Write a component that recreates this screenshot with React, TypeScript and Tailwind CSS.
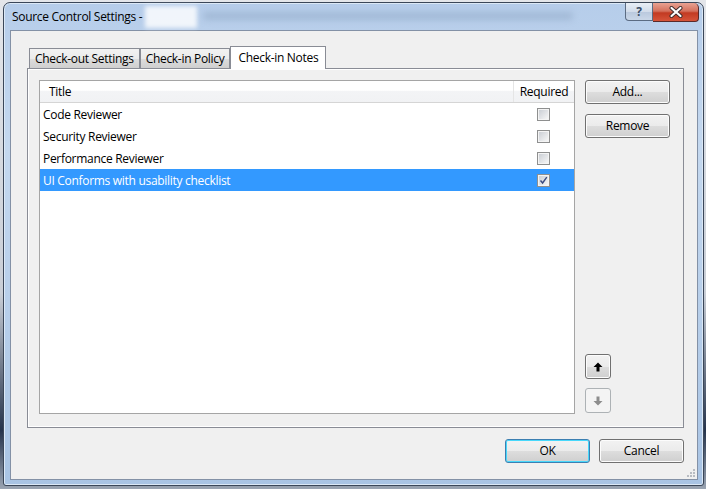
import { useState } from 'react';

type Note = {
  title: string;
  required: boolean;
};

const notes: Note[] = [
  { title: 'Code Reviewer', required: false },
  { title: 'Security Reviewer', required: false },
  { title: 'Performance Reviewer', required: false },
  { title: 'UI Conforms with usability checklist', required: true },
];

const font = "font-['Open_Sans',_'Noto_Sans',_sans-serif] tracking-[-0.3px]";

function Checkbox({ checked }: { checked: boolean }) {
  return (
    <span className="flex h-[13px] w-[13px] items-center justify-center border border-[#8e8f8f] bg-white">
      <span className="flex h-[11px] w-[11px] items-center justify-center border border-[#f4f4f4] bg-gradient-to-br from-[#cbcfd5] to-[#f6f6f6]">
        {checked && (
          <svg width="9" height="9" viewBox="0 0 9 9">
            <path d="M1.5 4.5 L3.6 7 L7.8 1.2" fill="none" stroke="#3a4a80" strokeWidth="1.4" />
          </svg>
        )}
      </span>
    </span>
  );
}

function Button({
  label,
  focused,
  className,
}: {
  label: string;
  focused?: boolean;
  className?: string;
}) {
  return (
    <button
      className={`flex h-[24px] w-[85px] items-center justify-center rounded-[3px] border text-[12px] text-black ${
        focused ? 'border-[#3c7fb1] shadow-[inset_0_0_0_1px_#48d8fb]' : 'border-[#707070] shadow-[inset_0_0_0_1px_#fcfcfc]'
      } bg-[linear-gradient(#f2f2f2_0%,#ebebeb_50%,#dddddd_51%,#cfcfcf_100%)] ${className ?? ''}`}
    >
      {label}
    </button>
  );
}

function ArrowButton({ up, disabled }: { up?: boolean; disabled?: boolean }) {
  const color = disabled ? '#8d8d8d' : '#000000';
  return (
    <button
      className={`flex h-[25px] w-[26px] items-center justify-center rounded-[3px] border ${
        disabled ? 'border-[#adb2b5] bg-[#f4f4f4]' : 'border-[#707070] bg-[linear-gradient(#f2f2f2_0%,#ebebeb_50%,#dddddd_51%,#cfcfcf_100%)] shadow-[inset_0_0_0_1px_#fcfcfc]'
      }`}
    >
      <svg width="10" height="10" viewBox="0 0 10 10">
        {up ? (
          <path d="M5 0.5 L9.5 5 L6.5 5 L6.5 9.5 L3.5 9.5 L3.5 5 L0.5 5 Z" fill={color} />
        ) : (
          <path d="M5 9.5 L9.5 5 L6.5 5 L6.5 0.5 L3.5 0.5 L3.5 5 L0.5 5 Z" fill={color} />
        )}
      </svg>
    </button>
  );
}

function Tab({ label, active }: { label: string; active?: boolean }) {
  if (active) {
    return (
      <div className="relative z-10 -mb-px flex h-[23px] items-start border border-b-0 border-[#898c95] bg-white px-[7px] pt-[2px] text-[12px] text-black">
        {label}
      </div>
    );
  }
  return (
    <div className="mt-[2px] flex h-[20px] items-center border border-b-0 border-[#898c95] bg-[linear-gradient(#f2f2f2_0%,#ebebeb_50%,#dddddd_51%,#cfcfcf_100%)] px-[5px] text-[12px] text-black">
      {label}
    </div>
  );
}

export default function App() {
  const [selected] = useState(3);

  return (
    <div className={`h-[489px] w-[706px] overflow-hidden bg-[linear-gradient(#e4e6ea_0%,#c9ced6_60%,#26344c_88%,#9aa4b2_100%)] pb-[3px] pl-[3px] pr-[2px] pt-[2px] ${font}`}>
      <div className="flex h-full flex-col rounded-t-[7px] rounded-b-[3px] border border-[#3b4759] bg-[linear-gradient(#b6cdea_0%,#c4d8ef_30%,#a9c4e4_100%)] shadow-[inset_0_0_0_1px_#dbe8f6]">
        <div className="relative flex h-[27px] shrink-0 items-start">
          <div className="ml-[8px] mt-[6px] text-[12px] leading-[16px] text-black">Source Control Settings -</div>
          <div className="ml-[3px] mt-[3px] h-[22px] w-[52px] bg-white/80 blur-[2px]" />
          <div className="ml-[6px] mt-[9px] h-[8px] w-[370px] rounded-full bg-[#8da6c4]/50 blur-[3px]" />
          <div className="ml-auto mr-[4px] flex">
            <div className="flex h-[18px] w-[28px] items-center justify-center rounded-bl-[4px] border border-t-0 border-[#5b6b82] bg-[linear-gradient(#e8eef6_0%,#d2dcea_50%,#b9c8dd_51%,#cad7e8_100%)] text-[12px] font-bold leading-none text-[#3b4d66]">
              ?
            </div>
            <div className="flex h-[19px] w-[46px] items-center justify-center rounded-br-[4px] rounded-tr-[5px] border border-l-0 border-t-0 border-[#5a2a2a] bg-[linear-gradient(#e8a292_0%,#d4715d_45%,#c23a22_55%,#d6543a_100%)]">
              <svg width="14" height="12" viewBox="0 0 14 12">
                <path d="M2.5 2 L11.5 10 M11.5 2 L2.5 10" stroke="#3a2a2a" strokeWidth="4" strokeLinecap="round" />
                <path d="M2.5 2 L11.5 10 M11.5 2 L2.5 10" stroke="#ffffff" strokeWidth="2.2" strokeLinecap="round" />
              </svg>
            </div>
          </div>
        </div>

        <div className="mb-[5px] ml-[6px] mr-[5px] flex flex-1 flex-col border border-[#8391a6] bg-[#f0f0f0]">
          <div className="relative flex flex-1 flex-col pl-[16px] pr-[13px] pt-[15px]">
            <div className="flex items-start pl-[2px]">
              <Tab label="Check-out Settings" />
              <Tab label="Check-in Policy" />
              <Tab label="Check-in Notes" active />
            </div>
            <div className="flex h-[360px] border border-[#898c95] bg-white p-px">
              <div className="flex flex-1 gap-[10px] bg-[#f0f0f0] pl-[10px] pr-[13px] pt-[10px]">
                <div className="flex h-[334px] w-[536px] flex-col border border-[#a5a5a5] bg-white">
                  <div className="flex h-[22px] shrink-0 border-b border-[#d5d5d5] bg-[linear-gradient(#ffffff_0%,#ffffff_45%,#f3f4f6_46%,#f1f2f4_100%)] text-[12px] text-black">
                    <div className="flex flex-1 items-center border-r border-[#e5e5e5] pl-[9px]">Title</div>
                    <div className="flex w-[60px] items-center justify-center">Required</div>
                  </div>
                  {notes.map((note, index) => (
                    <div
                      key={note.title}
                      className={`flex h-[22px] items-center text-[12px] ${
                        index === selected ? 'bg-[#3399ff] text-white' : 'text-black'
                      }`}
                    >
                      <div className="flex-1 pl-[3px] pt-px">{note.title}</div>
                      <div className="flex w-[60px] justify-center pr-[2px]">
                        <Checkbox checked={note.required} />
                      </div>
                    </div>
                  ))}
                </div>
                <div className="flex h-[333px] flex-col">
                  <Button label="Add..." />
                  <Button label="Remove" className="mt-[10px]" />
                  <div className="mt-auto flex flex-col gap-[9px]">
                    <ArrowButton up />
                    <ArrowButton disabled />
                  </div>
                </div>
              </div>
            </div>
            <div className="mt-[11px] flex justify-end gap-[9px]">
              <Button label="OK" focused />
              <Button label="Cancel" />
            </div>
            <svg className="absolute bottom-[2px] right-[2px]" width="8" height="8" viewBox="0 0 8 8">
              {[
                [6, 0],
                [6, 3],
                [3, 3],
                [6, 6],
                [3, 6],
                [0, 6],
              ].map(([x, y]) => (
                <rect key={`${x}-${y}`} x={x} y={y} width="2" height="2" fill="#b8bcc2" />
              ))}
            </svg>
          </div>
        </div>
      </div>
    </div>
  );
}
